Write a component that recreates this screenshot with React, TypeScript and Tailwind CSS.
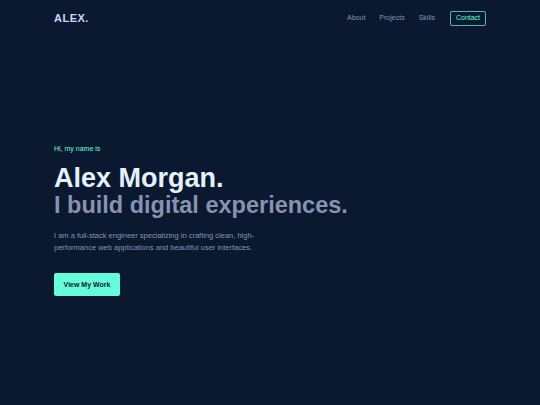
export default function App() {
  return (
    <div className="w-[540px] h-[405px] bg-[#0a192f] flex flex-col font-['Liberation_Sans',Arial,sans-serif] overflow-hidden">
      <nav className="h-[36px] px-[54px] flex items-center justify-between">
        <div className="text-[11px] font-bold text-[#ccd6f6] tracking-[0.5px]">
          ALEX<span className="text-[#64ffda]">.</span>
        </div>
        <div className="flex items-center gap-[14px] text-[7px] text-[#8892b0]">
          <a>About</a>
          <a>Projects</a>
          <a>Skills</a>
          <a className="ml-[1px] border border-[#64ffda]/70 rounded-[2px] w-[36px] h-[15px] flex items-center justify-center text-[#64ffda]">
            Contact
          </a>
        </div>
      </nav>
      <main className="px-[54px] pt-[108px] flex flex-col">
        <p className="text-[7px] text-[#64ffda] mb-[9px]">Hi, my name is</p>
        <h1 className="text-[27px] font-bold leading-[28px] text-[#e6f1ff]">Alex Morgan.</h1>
        <h2 className="text-[23.5px] font-bold leading-[27px] text-[#8892b0]">I build digital experiences.</h2>
        <p className="mt-[11px] w-[210px] text-[7.5px] leading-[12px] text-[#8892b0]">
          I am a full-stack engineer specializing in crafting clean, high-performance web applications and beautiful user interfaces.
        </p>
        <div className="mt-[16px]">
          <button className="bg-[#64ffda] text-[#0a192f] text-[7px] font-bold rounded-[2px] w-[66px] h-[23px]">
            View My Work
          </button>
        </div>
      </main>
    </div>
  );
}
